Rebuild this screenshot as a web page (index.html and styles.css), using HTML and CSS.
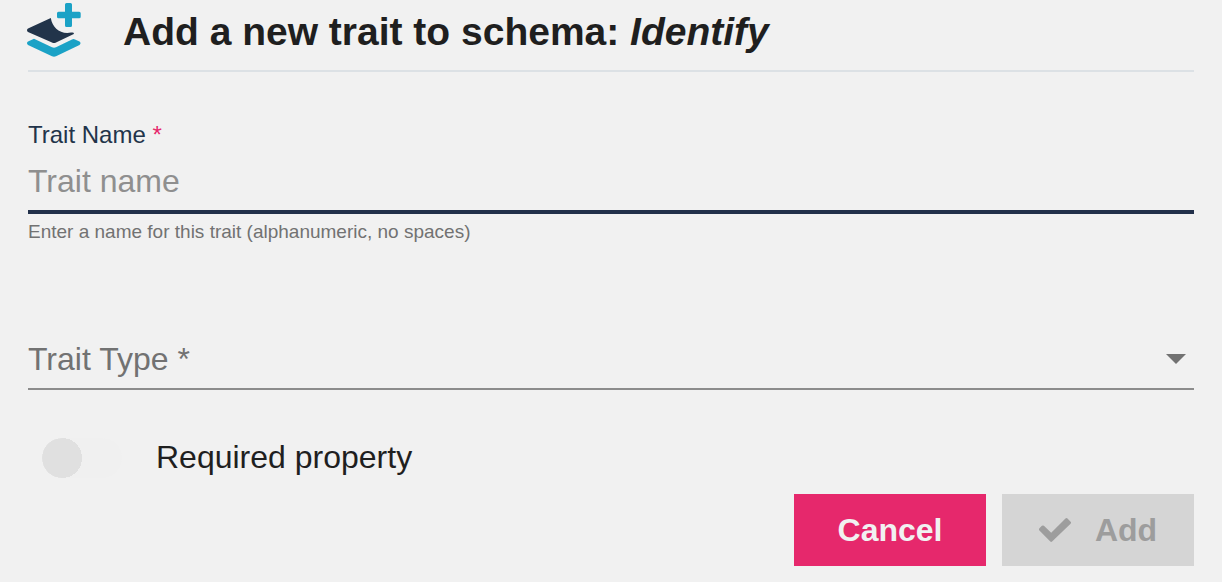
FILE: index.html
```html
<!DOCTYPE html>
<html lang="en">
<head>
  <meta charset="UTF-8">
  <title>Add a new trait</title>
  <link rel="stylesheet" href="styles.css">
</head>
<body>
  <form class="dialog">
    <header class="dialog-header">
      <svg class="logo" viewBox="0 0 55 60" aria-hidden="true">
        <path fill="#1ba2c6" d="M38.5 3h4q1.500 0 1.500 1.500v7.200h7.200q1.500 0 1.500 1.500v3.600q0 1.500-1.500 1.500h-7.200v7.200q0 1.500-1.500 1.500h-4q-1.500 0-1.500-1.500v-7.200h-6.500q-1.500 0-1.500-1.500v-3.600q0-1.500 1.500-1.500h6.500v-7.200q0-1.500 1.500-1.500z"/>
        <path fill="#22344a" d="M22.800 18C24.500 28 32 34.500 43 32.600q3.500-.7 2.800 1.400L28 42.600q-2 1-4 0L0 32q-2-1.800 0-3.500z"/>
        <path fill="#1ba2c6" d="M6 38.800L24 47.200q2 .9 4 0L44 39.400q1.500-.8 3 0l4.500 2.200q2 1.700 0 3.400L28 56.300q-2 .9-4 0L0 45q-2-1.700 0-3.400z"/>
      </svg>
      <h1>Add a new trait to schema: <em>Identify</em></h1>
    </header>

    <div class="field field-name">
      <label for="trait-name">Trait Name <span class="required">*</span></label>
      <input type="text" id="trait-name" placeholder="Trait name" aria-describedby="trait-hint">
      <p class="hint" id="trait-hint">Enter a name for this trait (alphanumeric, no spaces)</p>
    </div>

    <div class="field field-type">
      <select aria-label="Trait Type">
        <option>Trait Type *</option>
      </select>
      <svg class="arrow" viewBox="0 0 20 10" aria-hidden="true"><path fill="#727272" d="M0 0h20L10 10z"/></svg>
    </div>

    <div class="toggle">
      <input type="checkbox" id="required-property">
      <label for="required-property">Required property</label>
    </div>

    <div class="actions">
      <button type="button" class="btn btn-cancel">Cancel</button>
      <button type="submit" class="btn btn-add" disabled>
        <svg class="check" viewBox="0 0 32 24" aria-hidden="true"><path fill="#9d9d9d" d="M.4 10.200l2.500-2.400q1-.8 2 0L12.200 14.700 26.500.5q1-.9 2 0l3.100 3.200q.9 1 0 2L13.100 23.600q-.9.800-1.800 0L.4 12.400q-.9-1 0-2.200z"/></svg>
        Add
      </button>
    </div>
  </form>
</body>
</html>
```

FILE: styles.css
```css
* { box-sizing: border-box; }
body { margin: 0; background: #f1f1f1; color: #1f1f1f; font-family: "Liberation Sans", Arial, sans-serif; font-size: 32px; }
.dialog { padding: 0 28px 16px; }

.dialog-header { display: flex; align-items: flex-start; gap: 40px; height: 72px; border-bottom: 2px solid #dce1e5; }
.logo { width: 55px; height: 60px; flex: none; overflow: visible; }
h1 { margin: 8px 0 0; font-size: 39px; line-height: 48px; font-weight: bold; }

.field { display: flex; flex-direction: column; }
.field-name { margin-top: 49px; }
.field-name label { font-size: 24px; line-height: 28px; color: #22344a; }
.required { color: #e6286c; }
.field-name input { width: 100%; height: 65px; padding: 4px 0 0; border: 0; border-bottom: 4px solid #22304a; border-radius: 0; background: none; font: inherit; color: inherit; outline: none; }
.field-name input::placeholder { color: #8f8f8f; opacity: 1; }
.hint { margin: 6px 0 0; font-size: 19px; line-height: 24px; color: #727272; }

.field-type { position: relative; margin-top: 88px; }
.field-type select { appearance: none; width: 100%; height: 58px; padding: 0 0 2px; border: 0; border-bottom: 2px solid #8c8c8c; border-radius: 0; background: none; font: inherit; color: #727272; }
.arrow { position: absolute; right: 8px; top: 22px; width: 20px; height: 10px; pointer-events: none; }

.toggle { display: flex; align-items: center; gap: 34px; margin-top: 48px; padding-left: 14px; }
.toggle input { appearance: none; width: 80px; height: 40px; margin: 0; border-radius: 20px; background: radial-gradient(circle at 20px 20px, #e0e0e0 20px, #f0f0f0 20px); }
.toggle label { line-height: 38px; padding-bottom: 2px; }

.actions { display: flex; justify-content: flex-end; gap: 16px; margin-top: 16px; }
.btn { display: flex; align-items: center; justify-content: center; gap: 24px; min-width: 192px; height: 72px; border: 0; font: inherit; font-weight: bold; }
.btn-cancel { background: #e6286c; color: #f1f1f1; }
.btn-add { background: #d5d5d5; color: #9d9d9d; }
.check { width: 32px; height: 24px; }
```
